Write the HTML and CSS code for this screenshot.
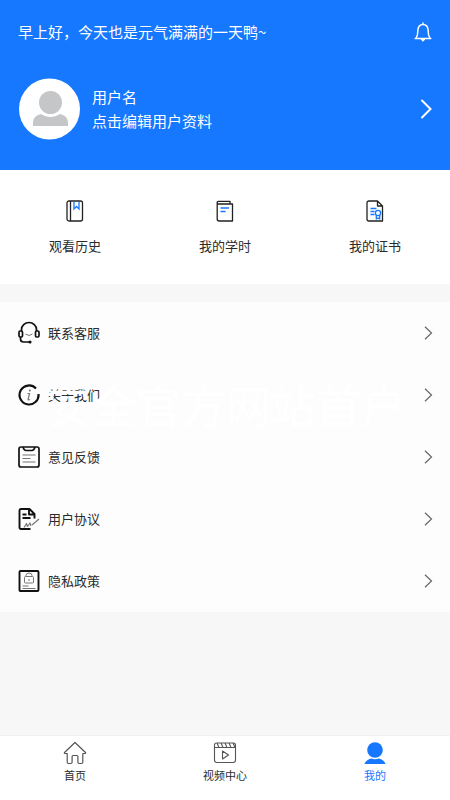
FILE: index.html
```html
<!DOCTYPE html>
<html lang="zh-CN">
<head>
<meta charset="utf-8">
<meta name="viewport" content="width=device-width, initial-scale=1">
<title>我的</title>
<link rel="stylesheet" href="styles.css">
</head>
<body>
<header class="hero">
  <div class="greeting">
    <p>早上好，今天也是元气满满的一天鸭~</p>
    <button class="bell" type="button" aria-label="通知">
      <svg width="18" height="20" viewBox="0 0 18 20" fill="none" stroke="currentColor" stroke-width="1.5" stroke-linejoin="round" stroke-linecap="round"><path d="M9 1v1.500M1.200 16.500h15.600c-1.500-1-2-2-2.300-4l-.4-4.500C13.800 4.500 11.800 2.500 9 2.500S4.200 4.500 3.900 8l-.4 4.500c-.3 2-.8 3-2.300 4z"/><path d="M7.500 17h3l-1.500 1.800z" fill="currentColor"/></svg>
    </button>
  </div>
  <a class="profile" href="#profile">
    <svg class="avatar" width="62" height="62" viewBox="0 0 62 62"><circle cx="31.500" cy="31" r="30.500" fill="#fff"/><circle cx="32.500" cy="24.500" r="11.500" fill="#c4c6c8"/><path d="M15 48v-3c0-5 3-8 8-9 6 4 13 4 19 0 5 1 8 4 8 9v3z" fill="#c4c6c8"/></svg>
    <span class="profile-text"><span>用户名</span><span>点击编辑用户资料</span></span>
    <svg width="12" height="20" viewBox="0 0 12 20" fill="none" stroke="currentColor" stroke-width="2" stroke-linecap="round"><path d="M2 1.500l8.500 8.500L2 18.500"/></svg>
  </a>
</header>

<main>
  <nav class="shortcuts" aria-label="学习">
    <a href="#history">
      <svg width="18" height="22" viewBox="0 0 18 22" fill="none" stroke="#222" stroke-width="1.300"><rect x="1" y="1" width="15.500" height="20" rx="2"/><path d="M4.500 1v20"/><path d="M8 2v7l2.500-2.500L13 9V2" stroke="#1677ff"/></svg>
      <span>观看历史</span>
    </a>
    <a href="#hours">
      <svg width="18" height="22" viewBox="0 0 18 22" fill="none" stroke="#222" stroke-width="1.300" stroke-linejoin="round"><path d="M1.200 3v16c0 1.200.8 2 2 2h13.300V4H2.500C.7 4 .7 1.300 2.500 1.300H14V4"/><path d="M4.500 8H13M4.500 11.500H9.500" stroke="#1677ff"/></svg>
      <span>我的学时</span>
    </a>
    <a href="#certificates">
      <svg width="18" height="22" viewBox="0 0 18 22" fill="none" stroke="#222" stroke-width="1.300" stroke-linejoin="round"><path d="M11.500 1H3Q1 1 1 3v16q0 2 2 2h13.500V6zM11.500 1v5h5"/><path d="M4.500 8.500h6M4.500 11.500h4M4.500 14.500h4" stroke="#1677ff"/><circle cx="12" cy="13" r="2.600" stroke="#1677ff"/><path d="M10.300 15.200V19l1.700-1 1.700 1v-3.800" stroke="#1677ff"/></svg>
      <span>我的证书</span>
    </a>
  </nav>

  <ul class="menu">
    <li><a href="#service">
      <svg class="icon" width="22" height="24" viewBox="0 0 22 24" fill="none" stroke="#111" stroke-width="1.700"><path d="M3.500 10V8.500a7.500 7 0 0 1 15 0V10"/><rect x="1" y="10" width="3.500" height="6" rx="1.200"/><rect x="17.500" y="10" width="3.500" height="6" rx="1.200"/><path d="M2.500 16v2q0 3 3 3h6"/><circle cx="12" cy="21" r="1.600" fill="#111" stroke="none"/><path d="M7.500 13q3.500 3 7 0" stroke="#777" stroke-width="1"/></svg>
      <span>联系客服</span>
      <svg class="arrow" width="9" height="14" viewBox="0 0 9 14"><path d="M1 .8L7.500 7 1 13.200"/></svg>
    </a></li>
    <li class="marked"><a href="#about">
      <svg class="icon" width="22" height="24" viewBox="0 0 22 24" fill="none" stroke="#111" stroke-width="2.200"><path d="M18 5.500A9.500 9.500 0 1 0 20.500 11"/><circle cx="11.800" cy="7.500" r="1" fill="#777" stroke="none"/><path d="M9.500 10.500h2l-1.500 6q0 .8 2 0" stroke="#777" stroke-width="1.200"/></svg>
      <span>关于我们</span>
      <svg class="arrow" width="9" height="14" viewBox="0 0 9 14"><path d="M1 .8L7.500 7 1 13.200"/></svg>
    </a>
      <p class="watermark" aria-hidden="true">安全官方网站首户</p>
    </li>
    <li><a href="#feedback">
      <svg class="icon" width="22" height="24" viewBox="0 0 22 24" fill="none" stroke="#111" stroke-width="1.700"><rect x="1" y="2" width="20" height="20" rx="2"/><path d="M5 2q1 3.500 3 3.500h6q2 0 3-3.500"/><path d="M4.500 10h13M4.500 13.500h8M4.500 17h13" stroke="#777" stroke-width="1.200"/></svg>
      <span>意见反馈</span>
      <svg class="arrow" width="9" height="14" viewBox="0 0 9 14"><path d="M1 .8L7.500 7 1 13.200"/></svg>
    </a></li>
    <li><a href="#agreement">
      <svg class="icon" width="22" height="24" viewBox="0 0 22 24" fill="none" stroke="#111" stroke-width="1.900" stroke-linejoin="round"><path d="M12.500 22H3q-1.500 0-1.500-1.500v-17Q1.500 2 3 2h8.500l5 5v4.500M11 2v5.500h5.500M4.500 7.500h4M4.500 11h8"/><path d="M6 20.500l2.500-4 1 3 2.500-3.500 1 3M14 18l7-6" stroke="#777" stroke-width="1.200"/></svg>
      <span>用户协议</span>
      <svg class="arrow" width="9" height="14" viewBox="0 0 9 14"><path d="M1 .8L7.500 7 1 13.200"/></svg>
    </a></li>
    <li><a href="#privacy">
      <svg class="icon" width="22" height="24" viewBox="0 0 22 24" fill="none" stroke="#111" stroke-width="1.900"><rect x="1.500" y="2" width="19" height="20" rx="1"/><g stroke="#777" stroke-width="1"><rect x="6.500" y="7.500" width="9" height="6.500" rx="1"/><path d="M8 7.500V6.500a3 2.500 0 0 1 6 0v1M11 10v2M4.500 17h6M4.500 19.500h13"/></g></svg>
      <span>隐私政策</span>
      <svg class="arrow" width="9" height="14" viewBox="0 0 9 14"><path d="M1 .8L7.500 7 1 13.200"/></svg>
    </a></li>
  </ul>
</main>

<nav class="tabs" aria-label="主导航">
  <a href="#home">
    <svg width="24" height="24" viewBox="0 0 24 24" fill="none" stroke="#555" stroke-width="1.200" stroke-linejoin="round"><path d="M12 1.500L1.500 11.500q-.5 1 1 1h1.700V21q0 1.500 1.500 1.500h2.200q1.200 0 1.200-1.500v-5.500q0-1 1-1h3.800q1 0 1 1V21q0 1.500 1.200 1.500h2.200q1.500 0 1.500-1.500v-8.500h1.700q1.500 0 1-1z"/></svg>
    <span>首页</span>
  </a>
  <a href="#videos">
    <svg width="24" height="24" viewBox="0 0 24 24" fill="none" stroke="#555" stroke-width="1.100" stroke-linejoin="round"><path d="M1.500 4q0-2 2-2h17q2 0 2 2v15q0 2.500-2.500 2.500H4Q1.500 21.500 1.500 19zM1.500 6.500h21M4 2l2 4.500M8 2l2 4.500M12 2l2 4.500M16 2l2 4.500M20 2l2 4.500M9.500 10v8l6-4z"/></svg>
    <span>视频中心</span>
  </a>
  <a class="active" href="#me" aria-current="page">
    <svg width="24" height="24" viewBox="0 0 24 24" fill="currentColor"><circle cx="12" cy="9" r="7.800"/><path d="M1.500 23q1-4 6.500-5.500 4 1.500 8 0 5.500 1.500 6.500 5.500z"/></svg>
    <span>我的</span>
  </a>
</nav>
</body>
</html>
```
FILE: styles.css
```css
* {
  box-sizing: border-box;
}

body {
  margin: 0;
  min-height: 100vh;
  display: flex;
  flex-direction: column;
  background: #f7f7f7;
  color: #2b2b2b;
  font-family: "Noto Sans CJK SC", sans-serif;
  font-size: 13px;
  line-height: 20px;
}

a {
  color: inherit;
  text-decoration: none;
}

p,
ul {
  margin: 0;
  padding: 0;
}

svg {
  display: block;
  flex: none;
}

.hero {
  padding: 20px 18px 30px;
  background: #1677ff;
  color: #fff;
  font-size: 15px;
  line-height: 24px;
}

.greeting {
  display: flex;
  justify-content: space-between;
  align-items: center;
}

.bell {
  padding: 0;
  border: 0;
  background: none;
  color: inherit;
}

.profile {
  display: flex;
  align-items: center;
  gap: 12px;
  margin-top: 34px;
}

.profile-text {
  display: flex;
  flex: 1;
  flex-direction: column;
}

main {
  flex: 1;
}

.shortcuts {
  display: grid;
  grid-template-columns: repeat(3, 1fr);
  padding: 30px 0 28px;
  background: #fff;
}

.shortcuts a {
  display: flex;
  flex-direction: column;
  align-items: center;
  gap: 14px;
}

.menu {
  margin-top: 18px;
  background: #fdfdfd;
  list-style: none;
}

.menu a {
  display: flex;
  align-items: center;
  gap: 8px;
  height: 62px;
  padding: 0 17px 0 18px;
}

.menu span {
  flex: 1;
}

.marked {
  position: relative;
}

.watermark {
  position: absolute;
  top: 16px;
  left: 46px;
  color: #fff;
  font-size: 45px;
  line-height: 50px;
  white-space: nowrap;
  pointer-events: none;
}

.arrow {
  fill: none;
  stroke: #666;
  stroke-width: 1.2;
}

.tabs {
  display: grid;
  grid-template-columns: repeat(3, 1fr);
  padding: 5px 0 15px;
  border-top: 1px solid #f0f0f0;
  background: #fff;
  font-size: 11px;
}

.tabs a {
  display: flex;
  flex-direction: column;
  align-items: center;
}

.tabs .active {
  color: #1677ff;
}
```
